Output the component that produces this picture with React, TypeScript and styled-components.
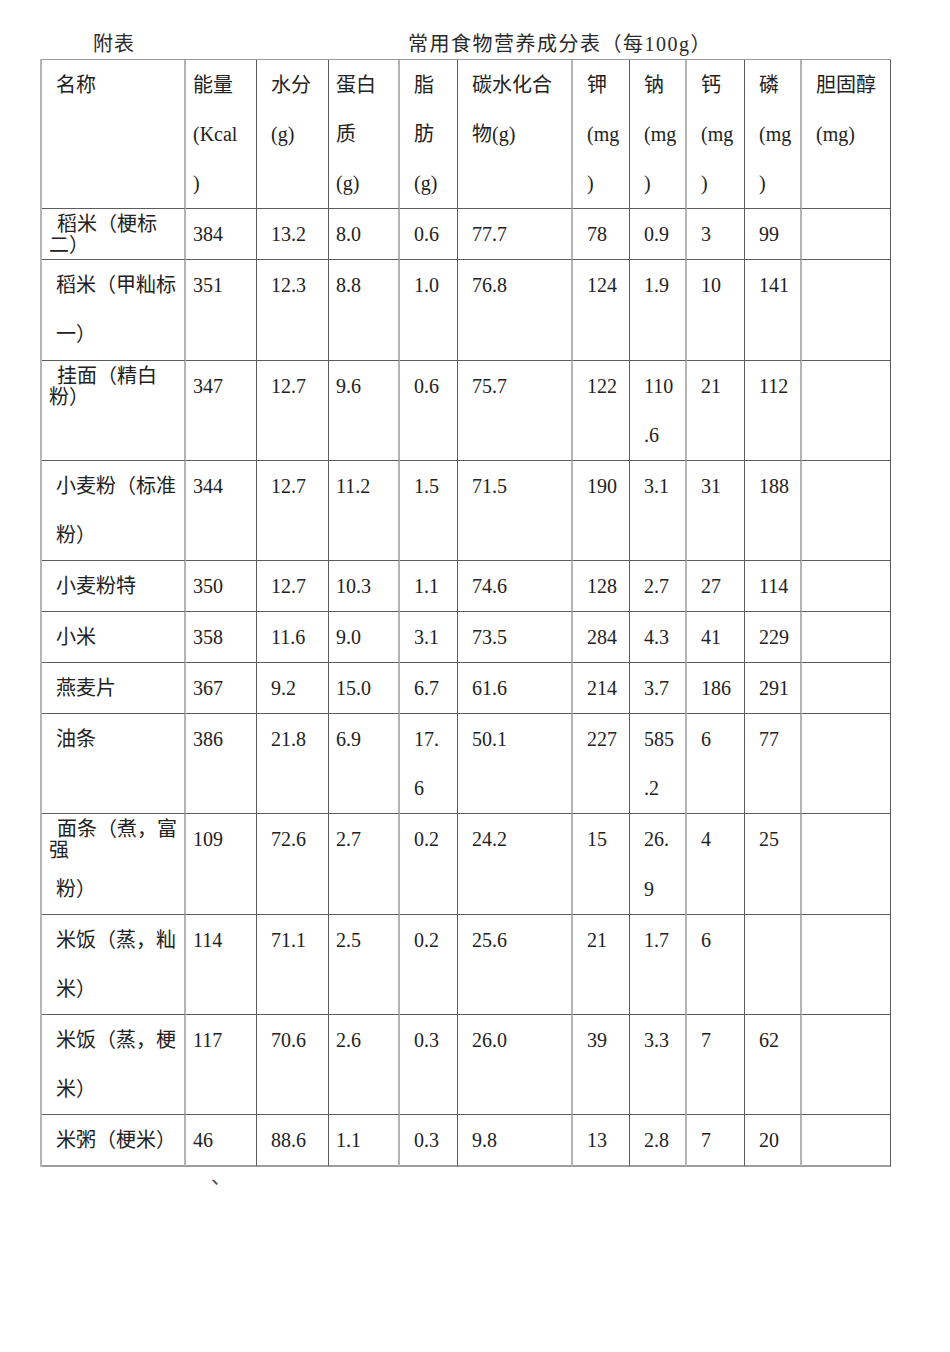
import React from "react";
import styled, { createGlobalStyle } from "styled-components";

const GlobalStyle = createGlobalStyle`
  html, body {
    margin: 0;
    padding: 0;
    background: #ffffff;
  }
  body {
    font-family: "Liberation Serif", "Noto Sans CJK SC", serif;
    color: #222222;
  }
`;

const LIGHT = "#b4b4b4";
const DARK = "#5c5c5c";
const UNIT = 49.1;

const Page = styled.div`
  width: 950px;
  min-height: 1352px;
  background: #ffffff;
`;

const TitleBar = styled.div`
  display: flex;
  height: 52px;
  padding: 32px 0 0 93px;
  box-sizing: border-box;
  font-size: 20px;
  line-height: 24px;
  color: #2a2a2a;
  white-space: nowrap;
`;

const TitleLabel = styled.span`
  width: 315px;
  flex: none;
  letter-spacing: 1px;
`;

const TitleText = styled.span`
  flex: none;
  letter-spacing: 1.5px;
`;

const Grid = styled.div`
  display: grid;
  grid-template-columns: 144px 71px 72px 71px 58px 115px 57px 57px 58px 57px 89px;
  margin: 7px 0 0 40px;
  width: max-content;
  border-left: 2px solid ${LIGHT};
  border-top: 1px solid #9a9a9a;
  font-size: 20px;
  line-height: ${UNIT}px;
`;

const Cell = styled.div<{ $pad: number; $edge: "light" | "dark"; $last?: boolean }>`
  box-sizing: border-box;
  padding-top: 1px;
  padding-left: ${(p) => p.$pad}px;
  border-right: ${(p) => (p.$edge === "light" ? `2px solid ${LIGHT}` : `1px solid ${DARK}`)};
  border-bottom: ${(p) => (p.$last ? `2px solid #9c9c9c` : `1px solid ${DARK}`)};
  white-space: nowrap;
  overflow: hidden;
`;

const Line = styled.div`
  display: block;
`;

const TightBlock = styled.div`
  box-sizing: border-box;
  height: ${UNIT}px;
  padding-top: 4px;
  margin-left: -7px;
  line-height: 21px;
  white-space: normal;
`;

const TightLine = styled.div<{ $indent?: boolean }>`
  padding-left: ${(p) => (p.$indent ? 8 : 0)}px;
`;

const Footnote = styled.div`
  margin: 0 0 0 211px;
  font-size: 20px;
  line-height: 20px;
  color: #444444;
`;

const PADS = [14, 7, 14, 7, 14, 14, 14, 14, 14, 14, 14];
const EDGES: ("light" | "dark")[] = [
  "light", "dark", "dark", "light", "dark", "light", "dark", "light", "dark", "light", "dark",
];

type Name =
  | { kind: "lines"; lines: string[] }
  | { kind: "tight"; tight: string[]; rest?: string[] };

type Row = { name: Name; values: string[][] };

const header: string[][] = [
  ["名称"],
  ["能量", "(Kcal", ")"],
  ["水分", "(g)"],
  ["蛋白", "质", "(g)"],
  ["脂", "肪", "(g)"],
  ["碳水化合", "物(g)"],
  ["钾", "(mg", ")"],
  ["钠", "(mg", ")"],
  ["钙", "(mg", ")"],
  ["磷", "(mg", ")"],
  ["胆固醇", "(mg)"],
];

const v = (...items: (string | string[])[]) => items.map((i) => (Array.isArray(i) ? i : [i]));

const rows: Row[] = [
  { name: { kind: "tight", tight: ["稻米（梗标", "二）"] }, values: v("384", "13.2", "8.0", "0.6", "77.7", "78", "0.9", "3", "99", "") },
  { name: { kind: "lines", lines: ["稻米（甲籼标", "一）"] }, values: v("351", "12.3", "8.8", "1.0", "76.8", "124", "1.9", "10", "141", "") },
  { name: { kind: "tight", tight: ["挂面（精白", "粉）"] }, values: v("347", "12.7", "9.6", "0.6", "75.7", "122", ["110", ".6"], "21", "112", "") },
  { name: { kind: "lines", lines: ["小麦粉（标准", "粉）"] }, values: v("344", "12.7", "11.2", "1.5", "71.5", "190", "3.1", "31", "188", "") },
  { name: { kind: "lines", lines: ["小麦粉特"] }, values: v("350", "12.7", "10.3", "1.1", "74.6", "128", "2.7", "27", "114", "") },
  { name: { kind: "lines", lines: ["小米"] }, values: v("358", "11.6", "9.0", "3.1", "73.5", "284", "4.3", "41", "229", "") },
  { name: { kind: "lines", lines: ["燕麦片"] }, values: v("367", "9.2", "15.0", "6.7", "61.6", "214", "3.7", "186", "291", "") },
  { name: { kind: "lines", lines: ["油条"] }, values: v("386", "21.8", "6.9", ["17.", "6"], "50.1", "227", ["585", ".2"], "6", "77", "") },
  { name: { kind: "tight", tight: ["面条（煮，富", "强"], rest: ["粉）"] }, values: v("109", "72.6", "2.7", "0.2", "24.2", "15", ["26.", "9"], "4", "25", "") },
  { name: { kind: "lines", lines: ["米饭（蒸，籼", "米）"] }, values: v("114", "71.1", "2.5", "0.2", "25.6", "21", "1.7", "6", "", "") },
  { name: { kind: "lines", lines: ["米饭（蒸，梗", "米）"] }, values: v("117", "70.6", "2.6", "0.3", "26.0", "39", "3.3", "7", "62", "") },
  { name: { kind: "lines", lines: ["米粥（梗米）"] }, values: v("46", "88.6", "1.1", "0.3", "9.8", "13", "2.8", "7", "20", "") },
];

const Lines: React.FC<{ lines: string[] }> = ({ lines }) => (
  <>
    {lines.map((l, i) => (
      <Line key={i}>{l === "" ? "\u00a0" : l}</Line>
    ))}
  </>
);

const NameContent: React.FC<{ name: Name }> = ({ name }) => {
  if (name.kind === "lines") return <Lines lines={name.lines} />;
  return (
    <>
      <TightBlock>
        {name.tight.map((t, i) => (
          <TightLine key={i} $indent={i === 0}>
            {t}
          </TightLine>
        ))}
      </TightBlock>
      {name.rest && <Lines lines={name.rest} />}
    </>
  );
};

export default function App() {
  return (
    <Page>
      <GlobalStyle />
      <TitleBar>
        <TitleLabel>附表</TitleLabel>
        <TitleText>常用食物营养成分表（每100g）</TitleText>
      </TitleBar>
      <Grid>
        {header.map((h, c) => (
          <Cell key={`h${c}`} $pad={PADS[c]} $edge={EDGES[c]}>
            <Lines lines={h} />
          </Cell>
        ))}
        {rows.map((r, ri) => {
          const last = ri === rows.length - 1;
          return (
            <React.Fragment key={ri}>
              <Cell $pad={PADS[0]} $edge={EDGES[0]} $last={last}>
                <NameContent name={r.name} />
              </Cell>
              {r.values.map((val, ci) => (
                <Cell key={ci} $pad={PADS[ci + 1]} $edge={EDGES[ci + 1]} $last={last}>
                  <Lines lines={val} />
                </Cell>
              ))}
            </React.Fragment>
          );
        })}
      </Grid>
      <Footnote>、</Footnote>
    </Page>
  );
}
